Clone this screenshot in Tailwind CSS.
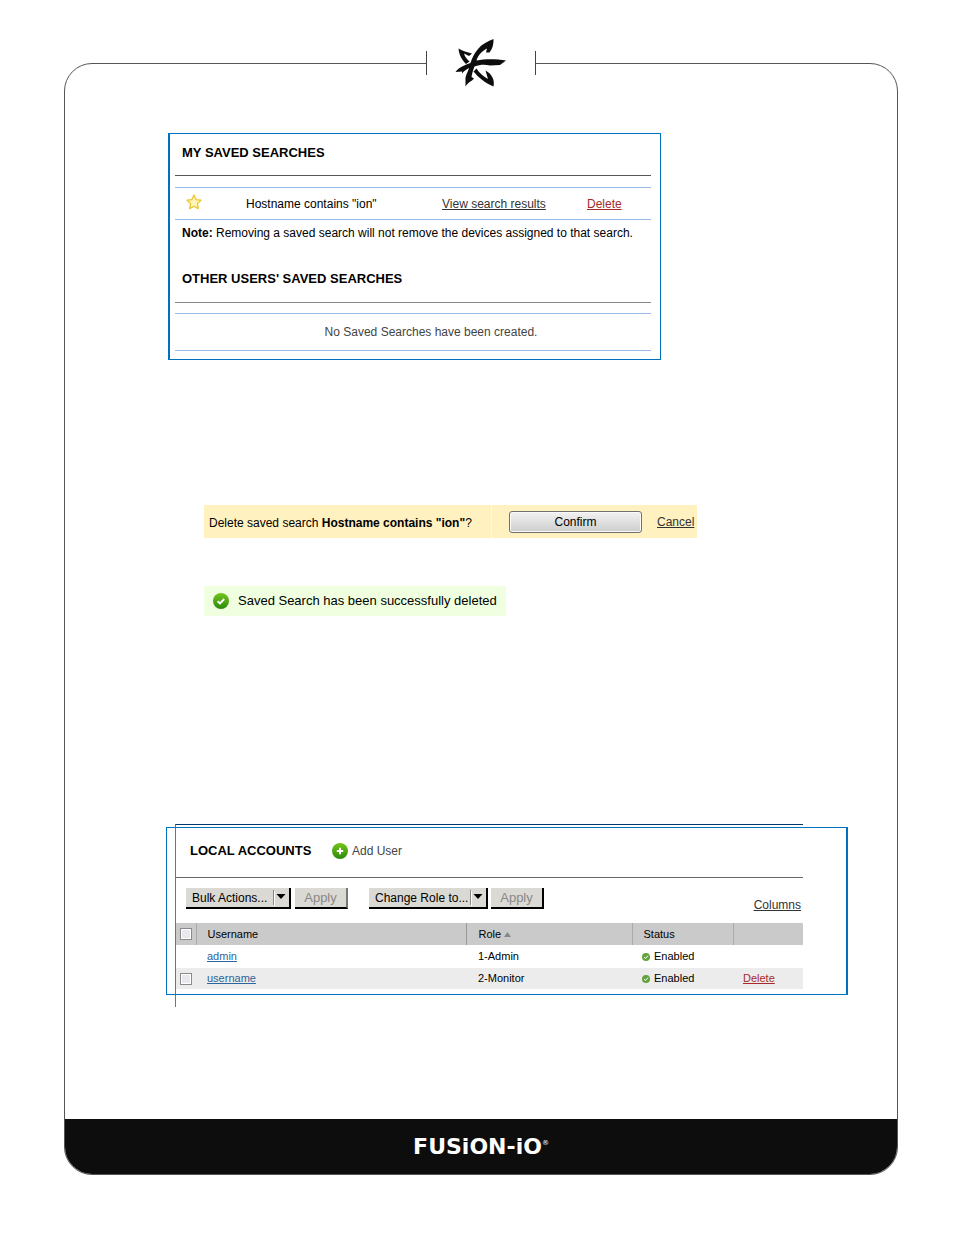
<!DOCTYPE html>
<html lang="en">
<head>
    <meta charset="UTF-8">
    <meta name="viewport" content="width=device-width, initial-scale=1.0">
    <title>Fusion-io - Saved searches and local accounts</title>
    <script src="https://cdn.jsdelivr.net/npm/@tailwindcss/browser@4"></script>
</head>
<body class="bg-white text-black text-xs font-['Liberation_Sans',Arial,sans-serif]">
<div class="mt-[63px] ml-16 mr-14 mb-15 border border-[#555] rounded-[28px]">
    <!-- logo between the two ticks -->
    <header class="-mt-[26px] mx-auto w-[110px] h-[50px] bg-white flex items-center justify-between">
        <span class="w-px h-6 bg-[#444]"></span>
        <svg class="w-[54px] h-[50px]" viewBox="0 0 54 50" fill="#0d0d0d" aria-label="Fusion-io">
            <path d="M39.5 1C34 3 28 6 24 11C20 16 18 20 16.5 25C11 27 5 29 1.5 34L8 33.5L8 35.5C10 33 12 31.5 15 30C14 34 11 38 11.5 42V48.5C13 46 15 44 18 42.5L20 40.5L17.5 39C18 36 19 32 20.5 28.5C26 26.500 31 26.500 36 27.500L46 27L52 22.500C43 21 32 20.500 22.500 22.500C24 17 28 13 33 10.500L32 14.500L35.500 14.500C39 10 39.500 6 39.500 1Z"/>
            <path d="M4.5 10.5C9 13 13 14 18 15.500L15 18L10 15.500C11 19 13 21 15.500 23.500L12 26C8 22 5 17 4.500 10.500Z"/>
            <path d="M22.500 30.500L19.500 33.500C24 39 31 45 39.500 48.500C41 42 38 36 31.500 32.500L34 41C29 38 25 35 22.500 30.500Z"/>
        </svg>
        <span class="w-px h-6 bg-[#444]"></span>
    </header>

    <main>
        <!-- saved searches -->
        <section class="mt-[45px] ml-[103px] w-[493px] border border-l-2 border-[#0071bc] pl-[5px] pr-[9px] pb-[8px]">
            <h2 class="h-[42px] pl-[7px] pt-[9px] text-[13px] leading-5 font-bold border-b border-[#555]">MY SAVED SEARCHES</h2>
            <table class="mt-[11px] w-full table-fixed border-y border-[#99bbe8]">
                <tr class="h-8">
                    <td class="w-[71px] pl-[11px]">
                        <svg class="size-4 mb-1" viewBox="0 0 16 16" fill="#fff6b8" stroke="#ecc630" stroke-width="1.3" stroke-linejoin="round" aria-label="Saved">
                            <path d="M8 1L10.1 5.6L15 6.2L11.4 9.6L12.3 14.6L8 12.2L3.7 14.6L4.6 9.6L1 6.2L5.9 5.6Z"/>
                        </svg>
                    </td>
                    <td class="w-[196px]">Hostname contains "ion"</td>
                    <td class="w-[145px]"><a href="#" class="underline text-[#333]">View search results</a></td>
                    <td><a href="#" class="underline text-[#a62a2a]">Delete</a></td>
                </tr>
            </table>
            <p class="pl-[7px] pt-[3px] leading-5"><b>Note:</b> Removing a saved search will not remove the devices assigned to that search.</p>
            <h2 class="mt-[26px] h-[34px] pl-[7px] text-[13px] leading-5 font-bold border-b border-[#888]">OTHER USERS' SAVED SEARCHES</h2>
            <p class="mt-[10px] h-[38px] pl-9 leading-9 text-center text-[#444] border-y border-[#99bbe8]">No Saved Searches have been created.</p>
        </section>

        <!-- delete confirmation -->
        <section class="mt-[145px] ml-[139px] w-[493px] h-[33px] bg-[#fff2c0] flex items-center">
            <p class="w-[288px] h-full pl-[5px] leading-9 border-r border-[#fffae6]">Delete saved search <b>Hostname contains "ion"</b>?</p>
            <button class="ml-[17px] w-[133px] h-[22px] border border-[#707070] rounded-[3px] bg-linear-to-b from-[#f2f2f2] via-[#e0e0e0] to-[#cdcdcd] shadow-[inset_0_0_0_1px_#fafafa]">Confirm</button>
            <a href="#" class="ml-[15px] underline text-[#333]">Cancel</a>
        </section>

        <!-- success message -->
        <section class="mt-12 ml-[139px] w-[302px] h-[30px] pl-[9px] bg-[#efffdf] flex items-center gap-[9px]">
            <svg class="size-4" viewBox="0 0 16 16">
                <defs>
                    <linearGradient id="green" x1="0" y1="0" x2="0" y2="1">
                        <stop offset="0" stop-color="#76c51c"/>
                        <stop offset="1" stop-color="#2b8a0c"/>
                    </linearGradient>
                </defs>
                <circle cx="8" cy="8" r="8" fill="url(#green)"/>
                <path d="M4.6 8.2L7 10.4L11.2 6" fill="none" stroke="#fff" stroke-width="1.9"/>
            </svg>
            <p class="text-[13px]">Saved Search has been successfully deleted</p>
        </section>

        <!-- local accounts -->
        <section class="relative mt-[208px] ml-[110px] w-[628px] h-[183px] border-t border-l border-t-[#003a70] border-l-[#3c7fc0]">
            <div class="absolute -left-[10px] top-[2px] w-[682px] h-[168px] border border-r-2 border-[#0071bc] pointer-events-none"></div>
            <div class="h-[53px] pl-[14px] flex items-center border-b border-[#666]">
                <h2 class="w-[142px] text-[13px] font-bold">LOCAL ACCOUNTS</h2>
                <a href="#" class="flex items-center gap-1 text-[#444]">
                    <svg class="size-4" viewBox="0 0 16 16">
                        <circle cx="8" cy="8" r="8" fill="url(#green)"/>
                        <path d="M8 4.8V11.2M4.8 8H11.2" stroke="#fff" stroke-width="2"/>
                    </svg>
                    Add User
                </a>
            </div>
            <div class="h-[45px] pt-[10px] pl-[10px] pr-[2px] flex">
                <div class="relative w-[105px] h-[21px]">
                    <select aria-label="Bulk actions" class="appearance-none w-full h-full pl-[6px] bg-[#dbd9d3] border-r-2 border-b-2 border-black">
                        <option>Bulk Actions...</option>
                    </select>
                    <svg class="absolute right-[2px] top-[2px] w-4 h-4 pointer-events-none" viewBox="0 0 16 16">
                        <path d="M0.5 0V15" stroke="#888"/>
                        <path d="M1.5 1V16" stroke="#fff"/>
                        <path d="M3.5 4H12.5L8 9Z"/>
                    </svg>
                </div>
                <button disabled class="ml-1 w-[53px] h-[21px] text-[13px] text-[#888] bg-[#dbd9d3] border-r-2 border-b-2 border-r-[#777] border-b-black">Apply</button>
                <div class="relative ml-[21px] w-[119px] h-[21px]">
                    <select aria-label="Change role" class="appearance-none w-full h-full pl-[6px] bg-[#dbd9d3] border-r-2 border-b-2 border-black">
                        <option>Change Role to...</option>
                    </select>
                    <svg class="absolute right-[2px] top-[2px] w-4 h-4 pointer-events-none" viewBox="0 0 16 16">
                        <path d="M0.5 0V15" stroke="#888"/>
                        <path d="M1.5 1V16" stroke="#fff"/>
                        <path d="M3.5 4H12.5L8 9Z"/>
                    </svg>
                </div>
                <button disabled class="ml-[3px] w-[53px] h-[21px] text-[13px] text-[#888] bg-[#dbd9d3] border-r-2 border-b-2 border-black">Apply</button>
                <a href="#" class="ml-auto mt-[9px] leading-4 underline text-[#333]">Columns</a>
            </div>
            <table class="w-full table-fixed text-[11px] text-left">
                <tr class="h-[22px] bg-[#cacaca]">
                    <th class="w-5 pl-1 border-r border-[#aaa]"><input type="checkbox" aria-label="Select all" class="appearance-none block size-3 border border-[#8a8a8a] bg-[#e8e8ee] shadow-[inset_0_0_0_1px_#fff]"></th>
                    <th class="w-[270px] pl-[11px] font-normal border-r border-[#999]">Username</th>
                    <th class="w-[166px] pl-[12px] font-normal border-r border-[#aaa]">Role <svg class="inline w-[7px] h-[5px]" viewBox="0 0 7 5" fill="#888"><path d="M3.5 0L7 5H0Z"/></svg></th>
                    <th class="w-[101px] pl-[11px] font-normal border-r border-[#aaa]">Status</th>
                    <th></th>
                </tr>
                <tr class="h-[23px]">
                    <td></td>
                    <td class="pl-[11px]"><a href="#" class="underline text-[#2f639b]">admin</a></td>
                    <td class="pl-[12px]">1-Admin</td>
                    <td class="pl-[10px]">
                        <span class="flex items-center gap-1">
                            <svg class="size-2" viewBox="0 0 8 8"><circle cx="4" cy="4" r="4" fill="#62a33c"/><path d="M2 4L3.6 5.5L6 2.6" fill="none" stroke="#fff"/></svg>
                            Enabled
                        </span>
                    </td>
                    <td></td>
                </tr>
                <tr class="h-[21px] bg-[#ececec]">
                    <td class="pl-1"><input type="checkbox" aria-label="Select username" class="appearance-none block size-3 border border-[#8a8a8a] bg-[#e8e8ee] shadow-[inset_0_0_0_1px_#fff]"></td>
                    <td class="pl-[11px]"><a href="#" class="underline text-[#2f639b]">username</a></td>
                    <td class="pl-[12px]">2-Monitor</td>
                    <td class="pl-[10px]">
                        <span class="flex items-center gap-1">
                            <svg class="size-2" viewBox="0 0 8 8"><circle cx="4" cy="4" r="4" fill="#62a33c"/><path d="M2 4L3.6 5.5L6 2.6" fill="none" stroke="#fff"/></svg>
                            Enabled
                        </span>
                    </td>
                    <td class="pl-[10px]"><a href="#" class="underline text-[#a62a2a]">Delete</a></td>
                </tr>
            </table>
        </section>
    </main>

    <footer class="mt-28 h-[55px] bg-[#0d0d0d] rounded-b-[27px] flex items-center justify-center text-white">
        <p class="flex items-start text-[22px] leading-6 font-bold font-['DejaVu_Sans',sans-serif]">FUSiON-iO<span class="text-[7px] leading-4 font-normal">®</span></p>
    </footer>
</div>
</body>
</html>
